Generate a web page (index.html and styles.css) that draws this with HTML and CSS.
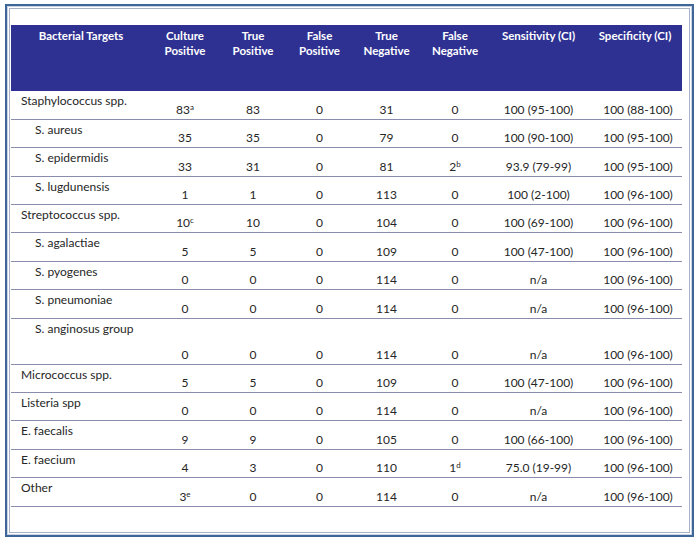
FILE: index.html
```html
<!DOCTYPE html>
<html>
<head>
<meta charset="utf-8">
<link rel="stylesheet" href="styles.css">
</head>
<body>
<div class="frame">
  <div class="inner">
    <table class="tbl">
      <colgroup>
        <col class="c-label"><col class="c-n"><col class="c-n"><col class="c-fp"><col class="c-n2"><col class="c-n"><col class="c-sens"><col class="c-spec">
      </colgroup>
      <thead>
        <tr>
          <th>Bacterial Targets</th>
          <th>Culture<br>Positive</th>
          <th>True<br>Positive</th>
          <th>False<br>Positive</th>
          <th>True<br>Negative</th>
          <th>False<br>Negative</th>
          <th>Sensitivity (CI)</th>
          <th>Specificity (CI)</th>
        </tr>
      </thead>
      <tbody>
        <tr><td class="lbl">Staphylococcus spp.</td><td>83<sup>a</sup></td><td>83</td><td>0</td><td>31</td><td>0</td><td>100 (95-100)</td><td>100 (88-100)</td></tr>
        <tr><td class="lbl sub">S. aureus</td><td>35</td><td>35</td><td>0</td><td>79</td><td>0</td><td>100 (90-100)</td><td>100 (95-100)</td></tr>
        <tr><td class="lbl sub">S. epidermidis</td><td>33</td><td>31</td><td>0</td><td>81</td><td>2<sup>b</sup></td><td>93.9 (79-99)</td><td>100 (95-100)</td></tr>
        <tr><td class="lbl sub">S. lugdunensis</td><td>1</td><td>1</td><td>0</td><td>113</td><td>0</td><td>100 (2-100)</td><td>100 (96-100)</td></tr>
        <tr><td class="lbl">Streptococcus spp.</td><td>10<sup>c</sup></td><td>10</td><td>0</td><td>104</td><td>0</td><td>100 (69-100)</td><td>100 (96-100)</td></tr>
        <tr><td class="lbl sub">S. agalactiae</td><td>5</td><td>5</td><td>0</td><td>109</td><td>0</td><td>100 (47-100)</td><td>100 (96-100)</td></tr>
        <tr><td class="lbl sub">S. pyogenes</td><td>0</td><td>0</td><td>0</td><td>114</td><td>0</td><td>n/a</td><td>100 (96-100)</td></tr>
        <tr><td class="lbl sub">S. pneumoniae</td><td>0</td><td>0</td><td>0</td><td>114</td><td>0</td><td>n/a</td><td>100 (96-100)</td></tr>
        <tr class="tall"><td class="lbl sub">S. anginosus group</td><td>0</td><td>0</td><td>0</td><td>114</td><td>0</td><td>n/a</td><td>100 (96-100)</td></tr>
        <tr><td class="lbl">Micrococcus spp.</td><td>5</td><td>5</td><td>0</td><td>109</td><td>0</td><td>100 (47-100)</td><td>100 (96-100)</td></tr>
        <tr><td class="lbl">Listeria spp</td><td>0</td><td>0</td><td>0</td><td>114</td><td>0</td><td>n/a</td><td>100 (96-100)</td></tr>
        <tr><td class="lbl">E. faecalis</td><td>9</td><td>9</td><td>0</td><td>105</td><td>0</td><td>100 (66-100)</td><td>100 (96-100)</td></tr>
        <tr><td class="lbl">E. faecium</td><td>4</td><td>3</td><td>0</td><td>110</td><td>1<sup>d</sup></td><td>75.0 (19-99)</td><td>100 (96-100)</td></tr>
        <tr><td class="lbl">Other</td><td>3<sup>e</sup></td><td>0</td><td>0</td><td>114</td><td>0</td><td>n/a</td><td>100 (96-100)</td></tr>
      </tbody>
    </table>
  </div>
</div>
</body>
</html>
```

FILE: styles.css
```css
html, body {
  margin: 0;
  padding: 0;
  background: #ffffff;
}

body {
  font-family: "Lato", "Open Sans", "Liberation Sans", sans-serif;
  color: #262626;
}

.frame {
  margin: 4px 0 0 5px;
  width: 681px;
  height: 525px;
  border: 2px solid #3f6699;
  box-shadow: inset 0 0 0 1px #c9d4e4;
  padding: 2px;
  box-sizing: content-box;
}

.inner {
  height: 100%;
  box-sizing: border-box;
  border: 1px solid #a7b2c6;
  padding: 16px 2px 0 1px;
}

.tbl {
  border-collapse: collapse;
  table-layout: fixed;
  width: 671px;
  font-size: 12px;
}

.c-label { width: 140px; }
.c-n { width: 68px; }
.c-fp { width: 65px; }
.c-n2 { width: 69px; }
.c-sens { width: 99px; }
.c-spec { width: 94px; }

thead th {
  background: #2e3192;
  color: #ffffff;
  font-weight: 700;
  font-size: 11.5px;
  line-height: 15px;
  height: 66px;
  vertical-align: top;
  padding: 3px 0 0;
  box-sizing: border-box;
  text-align: center;
}

tbody tr {
  height: 28.4px;
}

tbody tr.tall {
  height: 46px;
}

tbody td {
  border-bottom: 1px solid #8a8cae;
  text-align: center;
  vertical-align: bottom;
  padding: 0 0 2px;
  line-height: 15px;
  white-space: nowrap;
}

tbody td.lbl {
  text-align: left;
  vertical-align: top;
  padding: 2px 0 0 10px;
}

tbody td.sub {
  padding-left: 24px;
}

tbody td:last-child {
  padding-left: 6px;
}

sup {
  font-size: 8px;
  line-height: 0;
  vertical-align: 4px;
}
```
